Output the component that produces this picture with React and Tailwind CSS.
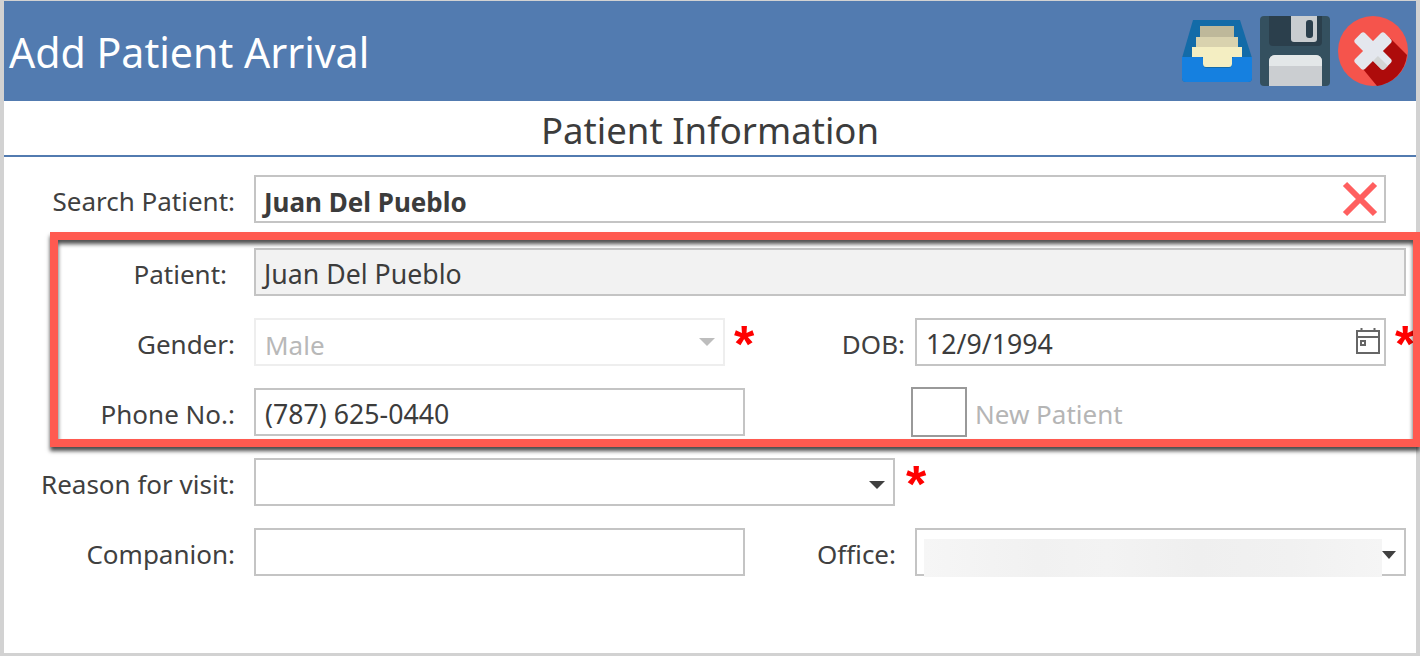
const font = { fontFamily: '"Noto Sans", sans-serif' };

function InboxIcon() {
  return (
    <svg width="70" height="62" viewBox="0 0 70 62">
      <path d="M11 0H58L70 38V58a4 4 0 0 1-4 4H4a4 4 0 0 1-4-4V38Z" fill="#136ba8" />
      <rect x="18" y="6" width="34" height="11" fill="#beb89a" />
      <rect x="14" y="17" width="42" height="10" fill="#d9d2ae" />
      <path d="M10 27H60V37H50V44a3 3 0 0 1-3 3H24a3 3 0 0 1-3-3V37H10Z" fill="#f4eec2" />
      <path d="M0 37H19a2 2 0 0 1 2 2v5a4 4 0 0 0 4 4H46a4 4 0 0 0 4-4v-5a2 2 0 0 1 2-2H70V58a4 4 0 0 1-4 4H4a4 4 0 0 1-4-4Z" fill="#1580e0" />
    </svg>
  );
}

function FloppyIcon() {
  return (
    <svg width="70" height="70" viewBox="0 0 70 70">
      <rect width="70" height="70" rx="4" fill="#34505f" />
      <path d="M9 0H62V26a4 4 0 0 1-4 4H13a4 4 0 0 1-4-4Z" fill="#2b3f4c" />
      <path d="M31 0H57V23a3 3 0 0 1-3 3H34a3 3 0 0 1-3-3Z" fill="#c9cdd0" />
      <rect x="46" y="4" width="7" height="18" rx="3" fill="#2b3f4c" />
      <path d="M9 70V45a6 6 0 0 1 6-6H56a6 6 0 0 1 6 6V70Z" fill="#cbced1" />
      <path d="M9 50V45a6 6 0 0 1 6-6H56a6 6 0 0 1 6 6V50Z" fill="#e3e7e8" />
    </svg>
  );
}

function CloseIcon() {
  return (
    <svg width="70" height="70" viewBox="0 0 70 70">
      <circle cx="35" cy="35" r="35" fill="#f5544c" />
      <path d="M20 47L52 22L69 39A35 35 0 0 1 39 70Z" fill="#ad0b0b" />
      <g transform="rotate(45 35 35)">
        <rect x="28" y="14" width="14" height="42" rx="3" fill="#e4e7ee" />
        <rect x="14" y="28" width="42" height="14" rx="3" fill="#e4e7ee" />
        <path d="M42 35H56V39a3 3 0 0 1-3 3H42Z" fill="#d3d5d5" />
      </g>
    </svg>
  );
}

function Caret({ color = "#404040", width = 16 }) {
  return (
    <svg width={width} height="8" viewBox="0 0 16 8" preserveAspectRatio="none" className="shrink-0">
      <path d="M0 0H16L8 8Z" fill={color} />
    </svg>
  );
}

function Star({ className = "" }) {
  return (
    <span className={`h-12 w-[18px] shrink-0 self-start text-[52px] leading-none font-bold text-[#ff0000] ${className}`} style={{ fontFamily: '"Liberation Sans", sans-serif' }}>
      *
    </span>
  );
}

function Label({ children, className = "w-[231px]" }) {
  return <div className={`shrink-0 pt-[3px] text-right whitespace-nowrap text-[#404040] ${className}`}>{children}</div>;
}

function Box({ children, className = "" }) {
  return (
    <div className={`flex h-12 shrink-0 items-center border-2 border-[#c4c4c4] px-2 pt-[5px] text-[26.7px] whitespace-nowrap text-[#3c3c3c] ${className}`}>
      {children}
    </div>
  );
}

export default function App() {
  return (
    <div className="relative box-border h-[656px] w-[1420px] border-x-4 border-t border-b-[3px] border-x-[#d2d2d2] border-t-[#d2d2d2] border-b-[#d2d2d2] bg-white text-[26px] leading-none" style={font}>
      <header className="flex h-[100px] items-center justify-between bg-[#527bb0] pr-2 pl-[5px]">
        <h1 className="pt-[4px] text-[41.1px] leading-none font-normal whitespace-nowrap text-white">Add Patient Arrival</h1>
        <div className="flex items-start gap-2">
          <div className="mt-1"><InboxIcon /></div>
          <FloppyIcon />
          <CloseIcon />
        </div>
      </header>

      <div className="flex h-[54px] items-center justify-center pt-[4px] text-[36.6px] text-[#3c3c3c]">Patient Information</div>
      <div className="h-0.5 bg-[#527bb0]" />

      <main className="flex flex-col gap-[22px] pt-[18px]">
        <div className="flex items-center gap-[19px]">
          <Label>Search Patient:</Label>
          <Box className="w-[1132px] justify-between pr-[6px] text-[26px] font-bold">
            <span>Juan Del Pueblo</span>
            <svg width="36" height="36" viewBox="0 0 36 36" className="-mt-[5px]">
              <path d="M3 3L33 33M33 3L3 33" stroke="#ff5f5f" strokeWidth="6" />
            </svg>
          </Box>
        </div>
        <div className="mt-[3px] flex items-center gap-[27px]">
          <Label className="w-[223px]">Patient:</Label>
          <Box className="w-[1152px] bg-[#f2f2f2]">Juan Del Pueblo</Box>
        </div>
        <div className="flex items-center">
          <Label>Gender:</Label>
          <Box className="ml-[19px] w-[471px] justify-between border-[#eeeeee] pr-2 pl-[9px] text-[26px] text-[#b8b8b8]">
            <span>Male</span>
            <span className="-mt-[5px]"><Caret color="#bdbdbd" /></span>
          </Box>
          <Star className="ml-[9px]" />
          <Label className="w-[153px]">DOB:</Label>
          <Box className="ml-[10px] w-[471px] justify-between pr-[3px] pl-[9px]">
            <span>12/9/1994</span>
            <svg width="26" height="28" viewBox="0 0 26 28" fill="none" stroke="#666666" strokeWidth="2" className="-mt-[7px]">
              <rect x="2" y="4" width="22" height="22" />
              <path d="M2 10H24M6.500 1V5M19.500 1V5" />
              <rect x="6" y="14" width="4" height="4" />
            </svg>
          </Box>
          <Star className="ml-[9px]" />
        </div>
        <div className="flex items-center">
          <Label>Phone No.:</Label>
          <Box className="ml-[19px] w-[491px] pl-[9px]">(787) 625-0440</Box>
          <div className="-my-px ml-[166px] h-[50px] w-[56px] shrink-0 border-2 border-[#999999]" />
          <span className="ml-2 pt-[3px] whitespace-nowrap text-[#b5b5b5]">New Patient</span>
        </div>
        <div className="flex items-center">
          <Label>Reason for visit:</Label>
          <Box className="ml-[19px] w-[641px] justify-end pt-0 pr-2"><Caret /></Box>
          <Star className="ml-[11px]" />
        </div>
        <div className="flex items-center">
          <Label>Companion:</Label>
          <Box className="ml-[19px] w-[491px]" />
          <Label className="w-[151px]">Office:</Label>
          <Box className="ml-[19px] w-[491px] justify-between pt-0 pr-2 pl-[7px]">
            <div className="mt-[6px] h-[38px] w-[458px] bg-[linear-gradient(90deg,#f6f6f6,#f1f1f1_25%,#f3f3f3_40%,#efefef_60%,#f1f1f1_80%,#f5f5f5)]" />
            <Caret width={14} />
          </Box>
        </div>
      </main>

      <div className="pointer-events-none absolute top-[231px] left-[46px] h-[215px] w-[1370px] border-8 border-r-[7px] border-[#ff5a50] shadow-[0_4px_4px_rgba(0,0,0,0.7),inset_0_4px_4px_rgba(0,0,0,0.7)]" />
    </div>
  );
}
